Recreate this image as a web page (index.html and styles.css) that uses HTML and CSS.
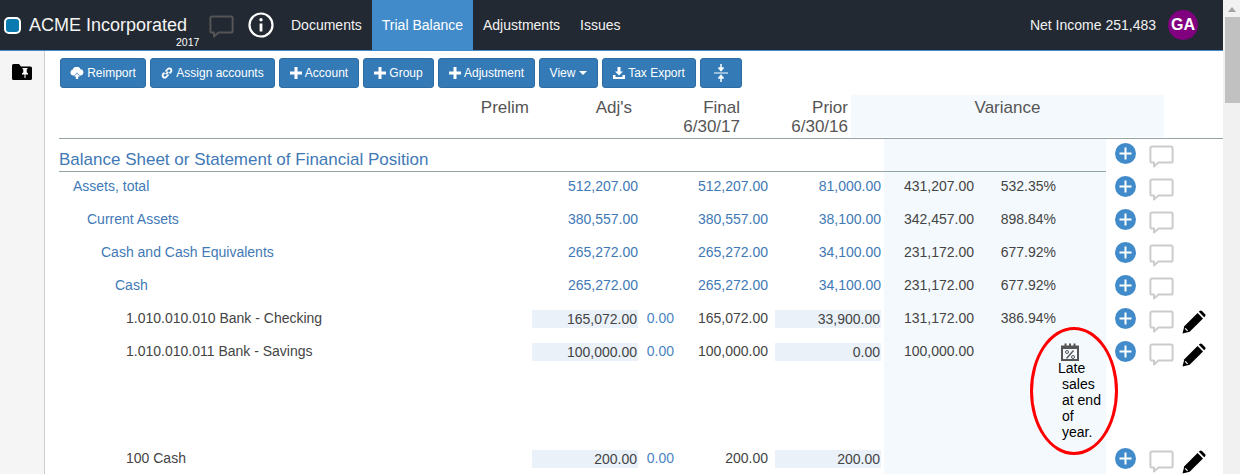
FILE: index.html
```html
<!DOCTYPE html>
<html lang="en">
<head>
<meta charset="utf-8">
<title>Trial Balance</title>
<link rel="stylesheet" href="styles.css">
</head>
<body>
<svg class="defs" width="0" height="0" aria-hidden="true">
  <symbol id="i-plus" viewBox="0 0 21 21"><circle cx="10.5" cy="10.5" r="10.5" fill="#428bca"/><path d="M10.5 4.5v12M4.5 10.5h12" stroke="#fff" stroke-width="2" fill="none"/></symbol>
  <symbol id="i-comment" viewBox="0 0 25 23"><path d="M3 1.5h19a1.6 1.6 0 0 1 1.6 1.6v12.8a1.6 1.6 0 0 1-1.6 1.6H9.5l-4.5 4v-4H3a1.6 1.6 0 0 1-1.6-1.6V3.100A1.600 1.600 0 0 1 3 1.500z" fill="none" stroke="currentColor" stroke-width="2" stroke-linejoin="round"/></symbol>
  <symbol id="i-pencil" viewBox="0 0 24 24"><path d="M0.500 23.500l1.800-7.200L15.600 3l5.400 5.400L7.700 21.700z" fill="#000"/><path d="M16.800 1.800l.8-.8c.7-.7 1.700-.7 2.400 0l3 3c.7.7.7 1.700 0 2.400l-.8.8z" fill="#000"/><path d="M3.200 18.400l2.400 2.400" stroke="#fff" stroke-width="1.200"/></symbol>
  <symbol id="i-btnplus" viewBox="0 0 12 12"><path d="M4.500 0h3v4.500H12v3H7.500V12h-3V7.500H0v-3h4.500z" fill="#fff"/></symbol>
</svg>
<div class="page">
<div class="content">
<header class="navbar">
  <div class="brand">
    <span class="brand-mark"></span>
    <span class="brand-name">ACME Incorporated</span>
    <span class="brand-year">2017</span>
  </div>
  <svg class="nav-comment" width="25" height="23"><use href="#i-comment"/></svg>
  <svg class="nav-info" width="26" height="26" viewBox="0 0 26 26"><circle cx="13" cy="13" r="11.500" fill="none" stroke="#fff" stroke-width="2.200"/><circle cx="13" cy="7.800" r="1.700" fill="#fff"/><path d="M13 11.500v8" stroke="#fff" stroke-width="2.800"/></svg>
  <nav class="nav-links">
    <a class="nav-link">Documents</a>
    <a class="nav-link active">Trial Balance</a>
    <a class="nav-link">Adjustments</a>
    <a class="nav-link">Issues</a>
  </nav>
  <div class="nav-right">
    <span class="net-income">Net Income 251,483</span>
    <span class="avatar">GA</span>
  </div>
</header>
<div class="body-wrap">
  <aside class="sidebar">
    <svg width="20" height="16" viewBox="0 0 20 16"><path d="M0 1.500A1.500 1.500 0 0 1 1.500 0H7l2 2.500h9.500A1.500 1.500 0 0 1 20 4v10.500a1.500 1.500 0 0 1-1.500 1.500h-17A1.500 1.500 0 0 1 0 14.500z" fill="#000"/><path d="M10.500 4h5v1l-.8.6v2.600l1.300 1.300v1h-2.500v3.500h-1v-3.500H10v-1l1.300-1.300V5.600L10.500 5z" fill="#fff"/></svg>
  </aside>
  <main class="main">
    <div class="toolbar">
      <button class="btn btn-reimport"><svg width="14" height="12" viewBox="0 0 14 12"><path d="M3 8.500A3 3 0 0 1 2.800 2.600 4 4 0 0 1 10.400 2.200 3.200 3.200 0 0 1 11 8.500H9.500L7 5.500 4.500 8.500z" fill="#fff"/><path d="M7 6.500l3 3H8.200V12H5.800V9.500H4z" fill="#fff"/></svg>Reimport</button>
      <button class="btn btn-assign"><svg width="12" height="12" viewBox="0 0 12 12"><path d="M4.800 7.200l2.400-2.400M4.500 4.500L6.800 2a2 2 0 0 1 3 3L8.500 6.300M7.500 7.500L5.200 10a2 2 0 0 1-3-3l1.300-1.300" fill="none" stroke="#fff" stroke-width="1.800"/></svg>Assign accounts</button>
      <button class="btn btn-account"><svg width="12" height="12"><use href="#i-btnplus"/></svg>Account</button>
      <button class="btn btn-group"><svg width="12" height="12"><use href="#i-btnplus"/></svg>Group</button>
      <button class="btn btn-adjust"><svg width="12" height="12"><use href="#i-btnplus"/></svg>Adjustment</button>
      <button class="btn btn-view">View<span class="caret"></span></button>
      <button class="btn btn-tax"><svg width="12" height="12" viewBox="0 0 12 12"><path d="M4.500 0h3v4.500H10L6 8.500 2 4.500h2.500z" fill="#fff"/><path d="M0 8h2.500v2h7V8H12v4H0z" fill="#fff"/></svg>Tax Export</button>
      <button class="btn btn-compress"><svg width="14" height="18" viewBox="0 0 14 18"><path d="M7 0v4M4.500 3.500L7 6.500l2.500-3" stroke="#fff" stroke-width="1.500" fill="#fff"/><path d="M0 9h14" stroke="#fff"/><path d="M7 18v-4M4.500 14.500L7 11.500l2.500 3" stroke="#fff" stroke-width="1.500" fill="#fff"/></svg></button>
    </div>
    <div class="head-row">
      <div class="head-cell">Prelim</div>
      <div class="head-cell">Adj's</div>
      <div class="head-cell">Final<br>6/30/17</div>
      <div class="head-cell">Prior<br>6/30/16</div>
      <div class="head-var">Variance</div>
    </div>
    <div class="rule"></div>

    <div class="row row-section">
      <div class="section-title">Balance Sheet or Statement of Financial Position</div>
      <div class="var"></div>
      <div class="acts"><svg class="plus" width="21" height="21"><use href="#i-plus"/></svg><svg class="cmt" width="25" height="23"><use href="#i-comment"/></svg></div>
    </div>

    <div class="row group">
      <div class="name lvl1">Assets, total</div><div class="num">512,207.00</div><div class="adj"></div><div class="num">512,207.00</div><div class="num prior">81,000.00</div>
      <div class="var"><span class="v1">431,207.00</span><span class="v2">532.35%</span></div>
      <div class="acts"><svg class="plus" width="21" height="21"><use href="#i-plus"/></svg><svg class="cmt" width="25" height="23"><use href="#i-comment"/></svg></div>
    </div>
    <div class="row group">
      <div class="name lvl2">Current Assets</div><div class="num">380,557.00</div><div class="adj"></div><div class="num">380,557.00</div><div class="num prior">38,100.00</div>
      <div class="var"><span class="v1">342,457.00</span><span class="v2">898.84%</span></div>
      <div class="acts"><svg class="plus" width="21" height="21"><use href="#i-plus"/></svg><svg class="cmt" width="25" height="23"><use href="#i-comment"/></svg></div>
    </div>
    <div class="row group">
      <div class="name lvl3">Cash and Cash Equivalents</div><div class="num">265,272.00</div><div class="adj"></div><div class="num">265,272.00</div><div class="num prior">34,100.00</div>
      <div class="var"><span class="v1">231,172.00</span><span class="v2">677.92%</span></div>
      <div class="acts"><svg class="plus" width="21" height="21"><use href="#i-plus"/></svg><svg class="cmt" width="25" height="23"><use href="#i-comment"/></svg></div>
    </div>
    <div class="row group">
      <div class="name lvl4">Cash</div><div class="num">265,272.00</div><div class="adj"></div><div class="num">265,272.00</div><div class="num prior">34,100.00</div>
      <div class="var"><span class="v1">231,172.00</span><span class="v2">677.92%</span></div>
      <div class="acts"><svg class="plus" width="21" height="21"><use href="#i-plus"/></svg><svg class="cmt" width="25" height="23"><use href="#i-comment"/></svg></div>
    </div>
    <div class="row leaf">
      <div class="name lvl5">1.010.010.010 Bank - Checking</div><div class="num"><span class="shade">165,072.00</span></div><div class="adj">0.00</div><div class="num">165,072.00</div><div class="num prior"><span class="shade">33,900.00</span></div>
      <div class="var"><span class="v1">131,172.00</span><span class="v2">386.94%</span></div>
      <div class="acts"><svg class="plus" width="21" height="21"><use href="#i-plus"/></svg><svg class="cmt" width="25" height="23"><use href="#i-comment"/></svg><svg class="pencil" width="24" height="24"><use href="#i-pencil"/></svg></div>
    </div>
    <div class="row leaf row-tall">
      <div class="name lvl5">1.010.010.011 Bank - Savings</div><div class="num"><span class="shade">100,000.00</span></div><div class="adj">0.00</div><div class="num">100,000.00</div><div class="num prior"><span class="shade">0.00</span></div>
      <div class="var"><span class="v1">100,000.00</span><span class="v2"></span>
        <div class="note">
          <span class="oval"></span>
          <svg class="note-icon" width="18" height="18" viewBox="0 0 18 18"><path d="M1 3.500h16v13.500H1z" fill="none" stroke="#555" stroke-width="2"/><path d="M1 3h16v3H1zM3.500 0.500h2v3h-2zM8 0.500h2v3H8zM12.500 0.500h2v3h-2z" fill="#555"/><path d="M12.500 7.500l-7 8" stroke="#555" stroke-width="1.300"/><circle cx="6" cy="9" r="1.500" fill="none" stroke="#555"/><circle cx="12" cy="14" r="1.500" fill="none" stroke="#555"/></svg>
          <div class="note-text">Late sales at end of year.</div>
        </div>
      </div>
      <div class="acts"><svg class="plus" width="21" height="21"><use href="#i-plus"/></svg><svg class="cmt" width="25" height="23"><use href="#i-comment"/></svg><svg class="pencil" width="24" height="24"><use href="#i-pencil"/></svg></div>
    </div>
    <div class="row leaf">
      <div class="name lvl5">100 Cash</div><div class="num"><span class="shade">200.00</span></div><div class="adj">0.00</div><div class="num">200.00</div><div class="num prior"><span class="shade">200.00</span></div>
      <div class="var"><span class="v1"></span><span class="v2"></span></div>
      <div class="acts"><svg class="plus" width="21" height="21"><use href="#i-plus"/></svg><svg class="cmt" width="25" height="23"><use href="#i-comment"/></svg><svg class="pencil" width="24" height="24"><use href="#i-pencil"/></svg></div>
    </div>
  </main>
</div>
</div>
<div class="scrollbar">
  <span class="scroll-up"></span>
  <span class="scroll-thumb"></span>
</div>
</div>
</body>
</html>
```
FILE: styles.css
```css
* { box-sizing: border-box; }
html, body { margin: 0; padding: 0; height: 474px; overflow: hidden; }
body { font-family: "Liberation Sans", Arial, sans-serif; font-size: 14px; color: #444; background: #fff; }
.defs { display: block; height: 0; }
.page { display: flex; height: 474px; overflow: hidden; }
.content { width: 1223px; flex: none; }

.navbar { display: flex; align-items: stretch; height: 51px; background: #222932; border-bottom: 1px solid #428bca; color: #fff; }
.brand { position: relative; display: flex; align-items: center; width: 209px; padding-left: 4px; }
.brand-mark { width: 17px; height: 17px; background: #0b7ab0; border: 2px solid #fff; border-radius: 5px; margin-right: 8px; margin-top: 1px; }
.brand-name { font-size: 18px; color: #f4f4f4; }
.brand-year { position: absolute; left: 176px; top: 36px; font-size: 10.500px; line-height: 13px; }
.nav-comment { color: #555; margin-top: 15px; flex: none; }
.nav-info { margin: 12px 0 0 14px; flex: none; }
.nav-links { display: flex; margin-left: 7px; }
.nav-link { display: flex; align-items: center; padding: 0 10px; height: 50px; color: #f2f2f2; }
.nav-link.active { background: #428bca; color: #fff; }
.nav-right { margin-left: auto; display: flex; align-items: center; padding-right: 25px; }
.net-income { color: #f2f2f2; margin-right: 12px; }
.avatar { width: 30px; height: 30px; border-radius: 50%; background: #800080; color: #fff; font-weight: bold; font-size: 16px; display: flex; align-items: center; justify-content: center; }

.body-wrap { display: flex; height: 423px; overflow: hidden; }
.sidebar { width: 45px; flex: none; background: #f5f5f5; border-right: 1px solid #ccc; padding: 13px 0 0 12px; }
.sidebar svg { display: block; }
.main { width: 1178px; flex: none; overflow: hidden; }

.toolbar { display: flex; gap: 4px; padding: 7px 0 0 15px; height: 44px; }
.btn { display: flex; align-items: center; justify-content: center; gap: 3px; height: 30px; padding: 0; background: #337ab7; border: 1px solid #2e6da4; border-radius: 3px; color: #fff; font: 12px "Liberation Sans", Arial, sans-serif; }
.btn-reimport { width: 86px; }
.btn-assign { width: 125px; }
.btn-account { width: 80px; }
.btn-group { width: 71px; }
.btn-adjust { width: 97px; }
.btn-view { width: 59px; }
.btn-tax { width: 94px; }
.btn-compress { width: 42px; }
.caret { display: inline-block; margin-left: 1px; border-top: 4px solid #fff; border-left: 4px solid transparent; border-right: 4px solid transparent; }

.head-row { display: grid; grid-template-columns: 470px 103px 108px 108px 3px 313px; margin-left: 14px; height: 42px; font-size: 17px; line-height: 19px; color: #555; }
.head-cell { text-align: right; padding-top: 3px; }
.head-var { grid-column: 6; background: #f4f9fd; text-align: center; padding-top: 3px; }
.rule { height: 1px; margin: 1px 0 0 14px; background: #94a3a3; }

.row { display: grid; grid-template-columns: 473px 106px 36px 94px 116px 222px 1fr; margin-left: 14px; height: 33px; line-height: 16px; }
.row-tall { height: 107px; }
.row-section { grid-template-columns: 825px 222px 1fr; }
.section-title { font-size: 17px; line-height: 20px; color: #4179b6; padding-top: 11px; box-shadow: inset 0 -1px 0 #94a3a3; }
.row-section .var { box-shadow: inset 0 -1px 0 #94a3a3; }
.name, .num, .adj, .v1, .v2 { padding-top: 6px; }
.lvl1 { padding-left: 14px; }
.lvl2 { padding-left: 28px; }
.lvl3 { padding-left: 42px; }
.lvl4 { padding-left: 56px; }
.lvl5 { padding-left: 67px; }
.group .name, .group .num { color: #4179b6; }
.num { text-align: right; }
.adj { text-align: right; color: #4a84c4; }
.shade { display: block; height: 18px; background: #eaf1f9; line-height: 18px; padding-right: 1px; }
.prior { width: 113px; padding-left: 7px; }
.var { display: flex; align-items: flex-start; background: #f4f9fd; color: #444; }
.v1 { width: 90px; flex: none; text-align: right; }
.v2 { width: 82px; flex: none; text-align: right; }
.note { position: relative; width: 50px; flex: none; padding: 6px 0 0 5px; color: #000; }
.note-icon { display: block; }
.oval { position: absolute; left: -26px; top: -10px; width: 88px; height: 128px; border: 3px solid #f00; border-radius: 50%; }
.note-text { position: relative; margin-top: -1px; padding-left: 1px; width: 45px; line-height: 16px; text-indent: -4px; }
.acts { display: flex; align-items: flex-start; color: #ccc; }
.plus { margin: 4px 0 0 9px; flex: none; }
.cmt { margin: 6px 0 0 13px; flex: none; }
.pencil { margin: 6px 0 0 8px; flex: none; }

.scrollbar { position: relative; width: 17px; flex: none; background: #f1f1f1; }
.scroll-up { position: absolute; left: 5px; top: 7px; width: 0; height: 0; border: 4px solid transparent; border-top: 0; border-bottom: 5px solid #a3a3a3; }
.scroll-thumb { position: absolute; left: 2px; top: 17px; width: 15px; height: 86px; background: #c1c1c1; }
```
